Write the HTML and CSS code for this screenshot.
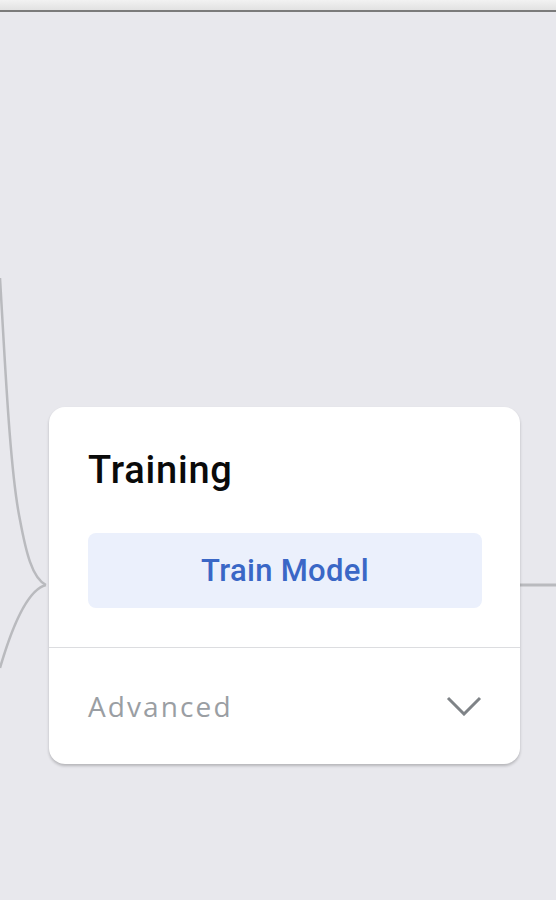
FILE: index.html
```html
<!DOCTYPE html>
<html>
<head>
<meta charset="utf-8">
<link rel="stylesheet" href="styles.css">
</head>
<body>
<div class="topbar"></div>
<div class="canvas">
  <svg class="edges" width="556" height="888" viewBox="0 0 556 888">
    <path d="M0 266 C 5 350, 10 460, 20 508 C 26 540, 32 566, 46 573" fill="none" stroke="#b9babe" stroke-width="2.5"/>
    <path d="M46 573 C 30 577, 14 608, 0 656" fill="none" stroke="#b9babe" stroke-width="2.5"/>
    <path d="M520 573 L556 573" fill="none" stroke="#b9babe" stroke-width="3"/>
  </svg>
  <div class="node">
    <div class="node-main">
      <div class="title">Training</div>
      <div class="btn">Train Model</div>
    </div>
    <div class="advanced">
      <span class="adv-label">Advanced</span>
      <svg class="chev" width="36" height="20" viewBox="0 0 36 20">
        <path d="M2 2 L18 18 L34 2" fill="none" stroke="#7f8387" stroke-width="3"/>
      </svg>
    </div>
  </div>
</div>
</body>
</html>
```
FILE: styles.css
```css
html, body {
  margin: 0;
  padding: 0;
  background: #e8e8ed;
  font-family: Roboto, "Liberation Sans", sans-serif;
}
.topbar {
  height: 10px;
  background: linear-gradient(#f2f2f2, #e2e2e2);
  border-bottom: 2px solid #7b7b7b;
}
.canvas {
  position: relative;
  height: 888px;
  overflow: hidden;
}
.edges {
  position: absolute;
  left: 0;
  top: 0;
}
.node {
  position: absolute;
  left: 49px;
  top: 395px;
  width: 471px;
  background: #ffffff;
  border-radius: 16px;
  box-shadow: 0 2px 3px rgba(0, 0, 0, 0.22);
  overflow: hidden;
}
.node-main {
  padding: 40px 38px 39px 39px;
  border-bottom: 1px solid #dcdde0;
}
.title {
  font-size: 38px;
  line-height: 46px;
  color: #0a0a0a;
  font-weight: 500;
  letter-spacing: 0.8px;
}
.btn {
  margin-top: 40px;
  height: 75px;
  border-radius: 8px;
  background: #ebf0fc;
  color: #3a67c6;
  font-size: 31px;
  font-weight: 500;
  letter-spacing: 0.3px;
  display: flex;
  align-items: center;
  justify-content: center;
}
.advanced {
  height: 116px;
  display: flex;
  align-items: center;
  justify-content: space-between;
  padding: 0 38px 0 39px;
}
.adv-label {
  font-family: "Open Sans", Roboto, sans-serif;
  font-size: 28px;
  color: #9a9ea3;
  font-weight: 500;
  letter-spacing: 2.1px;
}
.chev {
  display: block;
}
```
